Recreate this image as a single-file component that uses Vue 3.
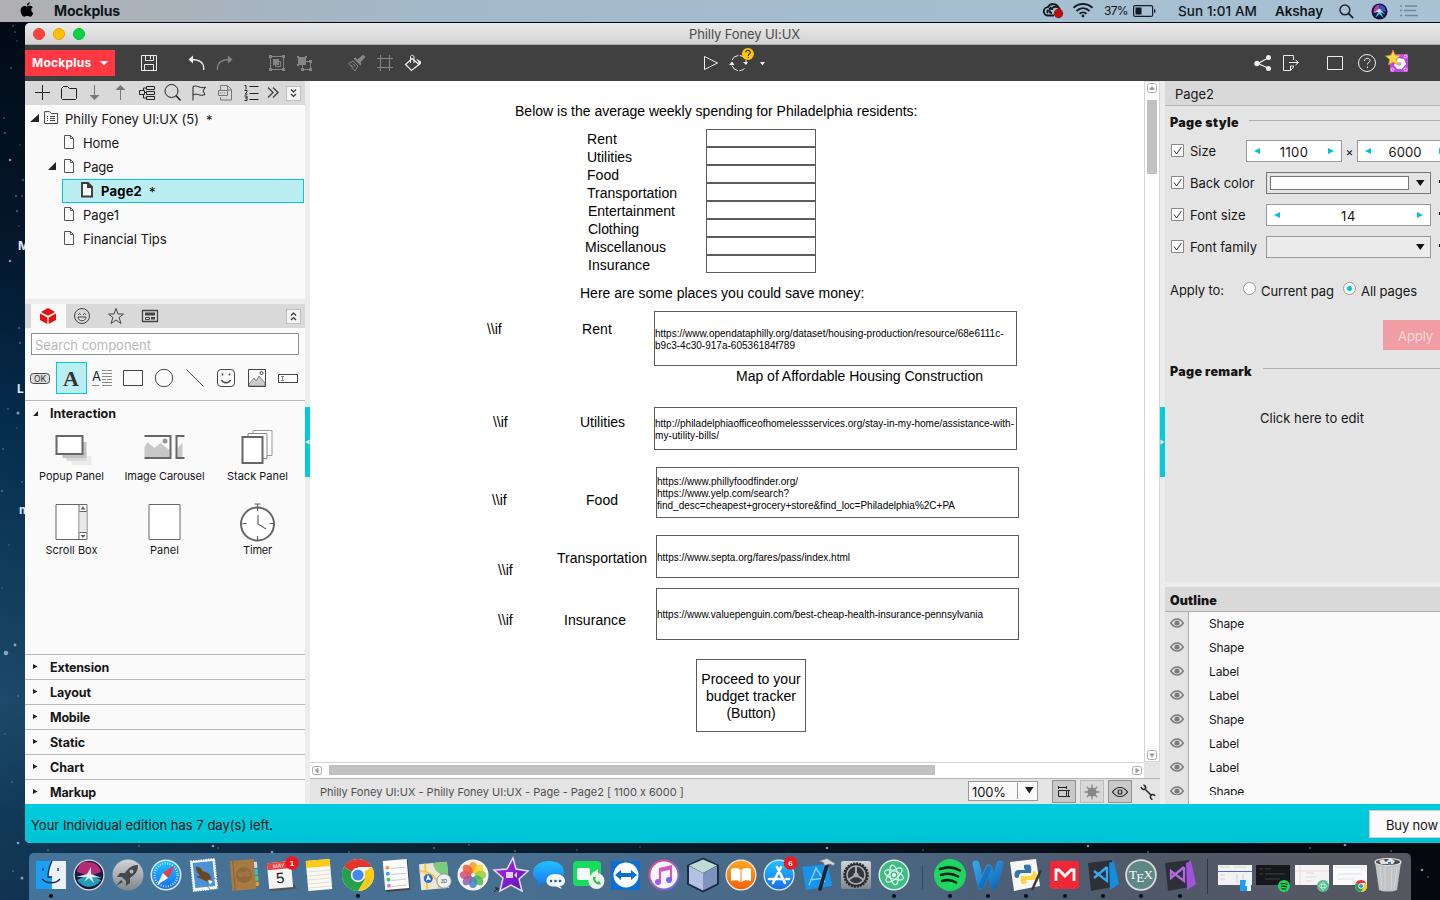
<script setup>
// Sets tracking so a label takes exactly the given width in pixels.
const vFit = {
  mounted(el, { value }) {
    const n = el.textContent.length
    const w = el.getBoundingClientRect().width
    el.style.letterSpacing = (value - w) / n + 'px'
  }
}

const stars = [
  [13, 26, 1], [15, 32, 0.9], [17, 41, 0.8], [11, 68, 1], [4, 118, 1.1], [5, 133, 1.2], [20, 145, 0.8], [10, 160, 1.3],
  [23, 180, 1.2], [16, 196, 1.2], [22, 196, 1.1], [17, 211, 1.2], [19, 226, 0.8], [10, 261, 1.3], [19, 328, 1.2],
  [20, 343, 1.2], [8, 409, 1], [18, 413, 1.5], [17, 428, 0.8], [3, 449, 1], [22, 482, 1], [2, 491, 1.2], [9, 545, 0.8],
  [2, 588, 0.8], [15, 645, 1.4], [6, 653, 2.3], [18, 696, 0.9], [5, 734, 0.8], [12, 782, 0.9], [18, 843, 1.3], [13, 871, 1.1],
  [22, 878, 1.5], [48, 850, 1.1], [139, 846, 1], [213, 846, 1.3], [218, 848, 1], [272, 852, 1.3], [349, 852, 1.1],
  [434, 848, 1.2], [469, 845, 1], [515, 851, 1.2], [577, 850, 0.9], [640, 847, 0.8], [827, 848, 1.3], [923, 850, 1],
  [1088, 846, 1.3], [1148, 852, 1.2], [1310, 848, 1.2], [1345, 845, 1.3], [1391, 851, 1.2], [1422, 870, 1.3], [1428, 877, 1.1]
]

const spending = [
  { t: 'Rent', x: 587, w: 30 }, { t: 'Utilities', x: 587, w: 45 }, { t: 'Food', x: 587, w: 32 },
  { t: 'Transportation', x: 587, w: 90 }, { t: 'Entertainment', x: 588, w: 87 }, { t: 'Clothing', x: 588, w: 51 },
  { t: 'Miscellanous', x: 585, w: 81 }, { t: 'Insurance', x: 588, w: 62 }
]

const place = (x, y) => ({ left: x - 310 + 'px', top: y - 81 + 'px' })

const labels = [
  { t: 'Below is the average weekly spending for Philadelphia residents:', x: 515, y: 111, w: 402.5 },
  ...spending.map((s, i) => ({ ...s, y: 139 + i * 18 })),
  { t: 'Here are some places you could save money:', x: 580, y: 293, w: 284.5 },
  { t: '\\\\if', x: 487, y: 329, w: 14.5 }, { t: 'Rent', x: 582, y: 329, w: 30 },
  { t: 'Map of Affordable Housing Construction', x: 736, y: 376, w: 247 },
  { t: '\\\\if', x: 493, y: 422, w: 14.5 }, { t: 'Utilities', x: 580, y: 422, w: 45 },
  { t: '\\\\if', x: 492, y: 500, w: 14.5 }, { t: 'Food', x: 586, y: 500, w: 32 },
  { t: '\\\\if', x: 498, y: 570, w: 14.5 }, { t: 'Transportation', x: 557, y: 558, w: 90 },
  { t: '\\\\if', x: 498, y: 620, w: 14.5 }, { t: 'Insurance', x: 564, y: 620, w: 62 }
]

const boxes = [
  { x: 654, y: 311, w: 363, h: 55, lines: [['https://www.opendataphilly.org/dataset/housing-production/resource/68e6111c-', 348.5], ['b9c3-4c30-917a-60536184f789', 140]] },
  { x: 654, y: 407, w: 363, h: 43, lines: [['http://philadelphiaofficeofhomelessservices.org/stay-in-my-home/assistance-with-', 359], ['my-utility-bills/', 64]] },
  { x: 656, y: 467, w: 363, h: 51, lines: [['https://www.phillyfoodfinder.org/', 141], ['https://www.yelp.com/search?', 132], ['find_desc=cheapest+grocery+store&find_loc=Philadelphia%2C+PA', 298]] },
  { x: 656, y: 535, w: 363, h: 43, lines: [['https://www.septa.org/fares/pass/index.html', 193]] },
  { x: 656, y: 588, w: 363, h: 52, lines: [['https://www.valuepenguin.com/best-cheap-health-insurance-pennsylvania', 326]] }
]

const groups = [['Extension', 59], ['Layout', 41], ['Mobile', 40], ['Static', 35], ['Chart', 34], ['Markup', 46]]
const outline = ['Shape', 'Shape', 'Label', 'Label', 'Shape', 'Label', 'Label', 'Shape']
const petals = ['#f9a01b', '#f5d328', '#9ccb3b', '#4bb749', '#3c86c6', '#8a63b0', '#d24b80', '#ef5a3a']
</script>

<template>
  <div class="desktop">
    <svg class="stars" width="1440" height="900">
      <circle v-for="(s, i) in stars" :key="i" :cx="s[0]" :cy="s[1]" :r="s[2]" fill="#b9cddb" :opacity="s[2] > 1.25 ? 0.7 : 0.32" />
    </svg>
    <span class="desk-label m">M</span>
    <span class="desk-label l">L</span>
    <span class="desk-label n">m</span>

    <header class="menubar">
      <svg class="apple" width="14" height="17" viewBox="0 0 14 17"><path d="M9.7.3c.1 1.500-1.200 3.200-2.800 3.200C6.700 2 8.100.5 9.700.3zM7 4.500c.7 0 1.700-.8 3.100-.7 1.200.1 2.200.6 2.700 1.500-2.300 1.500-1.900 4.600.5 5.600-.6 1.700-1.800 3.900-3.200 3.900-1.100 0-1.500-.7-2.900-.7s-1.800.7-2.900.7C2.600 14.800.6 11.800.6 8.600c0-3 1.900-4.700 3.900-4.700 1.100 0 2 .6 2.500.6z" /></svg>
      <b class="app"><span v-fit="66">Mockplus</span></b>
      <div class="status">
        <svg class="cc" width="22" height="18" viewBox="0 0 22 18"><g fill="none" stroke="#101a24" stroke-width="1.900"><path d="M12 13.500H6a4.200 4.200 0 010-8.400C8.500.9 14.500 1.100 16.500 5.500M9.500 5.500c-3 1-2.500 5.500.5 5.500M10 8c0-5 8-4 8 1M6 8a2 2 0 000 3" /></g><circle cx="16.500" cy="11.500" r="4.700" fill="#b80d10" /></svg>
        <svg class="wifi" width="22" height="16" viewBox="0 0 22 16"><g fill="none" stroke="#141f2a" stroke-width="2"><path d="M1.500 5.800c5.500-5 13.500-5 19 0M4.500 8.900c4-3.500 9-3.500 13 0M7.500 11.800c2-1.900 5-1.900 7 0" /></g><circle cx="11" cy="14" r="1.400" fill="#141f2a" /></svg>
        <span class="pct"><span v-fit="24">37%</span></span>
        <svg class="batt" width="23" height="12" viewBox="0 0 23 12"><rect x=".6" y=".6" width="19" height="10.800" rx="1.500" fill="none" stroke="#141f2a" stroke-width="1.200" /><path d="M2.500 2.500h6v7h-6z" fill="#101a24" /><path d="M21 4c2 .5 2 3.500 0 4z" fill="#141f2a" /></svg>
        <span class="clock"><span v-fit="79">Sun 1:01 AM</span></span>
        <span class="user"><span v-fit="48">Akshay</span></span>
        <svg class="lens" width="15" height="15" viewBox="0 0 15 15" fill="none" stroke="#1c2731" stroke-width="1.500"><circle cx="5.900" cy="5.900" r="4.900" /><path d="M9.500 9.500l4.700 4.700" stroke-width="1.800" /></svg>
        <svg class="mini-siri" width="17" height="17" viewBox="-17 -17 34 34"><circle r="16" fill="#15143e" /><path d="M-12 2C-11-10-6-14-1-13L0 0z" fill="#b93da8" /><path d="M-1-13C8-14 12-8 13 1L1-3z" fill="#3c50c8" /><path d="M0-5l-8 17 8-7 8 8z" fill="#49dbe8" /><path d="M-12 3L0-6 12 6 0 0z" fill="#fff" opacity=".75" /></svg>
        <svg class="list" width="18" height="12" viewBox="0 0 18 12" stroke="#6f8696" stroke-width="1.500"><path d="M0 1h2M5 1h12M0 5.500h2M4 5.500h12M0 10.500h2M5 10.500h13" /></svg>
      </div>
    </header>

    <main class="window">
      <div class="titlebar">
        <i class="light red"></i><i class="light amber"></i><i class="light green"></i>
        <span class="title"><span v-fit="111">Philly Foney UI:UX</span></span>
      </div>

      <nav class="toolbar">
        <div class="brand"><span v-fit="59.500">Mockplus</span><svg width="8" height="5"><path d="M0 0h8L4 4.500z" fill="#fff" /></svg></div>
        <svg class="g20"><path d="M6.500 10.500h15v15h-15zM10.500 10.500v5h8v-5M9.500 25.500v-6h9v6M15.500 11v3" /></svg>
        <svg class="g20"><path d="M20.700 25v-2c0-5-4-8.500-12-8.500" stroke-width="1.300" /><path d="M5.500 14.500l4.500-4v8z" fill="#eee" stroke="none" /></svg>
        <svg class="dim"><path d="M6.500 25v-2c0-5 4-8.500 12-8.500" stroke-width="1.300" /><path d="M21.500 14.500l-4.500-4v8z" fill="#858585" stroke="none" /></svg>
        <svg class="g24 dim"><path d="M7.500 11.500h13v13h-13z" /><path d="M6 10h3v3H6zM19 10h3v3h-3zM6 23h3v3H6zM19 23h3v3h-3zM10 14h6v6h-6z" fill="#858585" stroke="none" /><path d="M12.500 16.500h5v5h-5z" /></svg>
        <svg class="dim"><path d="M7 12h8v8H7zM6 11h2v2H6zM14 11h2v2h-2zM6 19h2v2H6z" fill="#858585" stroke="none" /><path d="M11.500 16.500h8v8h-8z" /><path d="M18 15h3v3h-3zM10 23h3v3h-3zM18 23h3v3h-3z" fill="#858585" stroke="none" /></svg>
        <svg class="g24 dim"><path d="M5.500 18.500l4.500-2.500 5 5-3 5z" /><path d="M8 20l2 2M10 18.500l2 3" /><path d="M10.500 13.500l2-1 6 6-1 2zM14.500 14.500l5.500-5 2.500 2.500-5 5.500z" fill="#858585" stroke="none" /></svg>
        <svg class="dim"><path d="M9.500 10v16M18.500 10v16M6 13.500h16M6 22.500h16" /></svg>
        <svg><path d="M13 13.500l7 6-7.500 6-6-6z" stroke-width="1.300" /><path d="M11.500 18v-6c0-2.500 3.500-2 3.500 0v6" /><path d="M17 13.500l5 3v2l-1.500 2-1.500-4z" fill="#eee" stroke="none" /></svg>
        <svg class="g270"><path d="M7.500 11.500v13l13-6.500z" /></svg>
        <svg class="sync"><path d="M7 20.500a7.500 7.500 0 0012.500 3M7 15a7.500 7.500 0 0112-2.500M21 15v3" stroke-dasharray="8 1.500" /><path d="M4 20l3-3.500 2.500 3.500zM18 17l3 3 2-3z" fill="#eee" stroke="none" /><circle cx="22.900" cy="9" r="6" fill="#ffc800" stroke="none" /><path d="M20.700 7.500c0-3.500 5-2.500 4.500.3-.3 1.300-2 1-2 3.200M23.200 12v1" stroke="#333" stroke-width="1.200" /></svg>
        <svg class="caret"><path d="M7 17h5l-2.500 3.500z" fill="#eee" stroke="none" /></svg>
        <svg class="share"><path d="M20 12.500L9 18.500l11 5" stroke-width="1.300" /><g fill="#eee" stroke="none"><circle cx="19.500" cy="12.500" r="2.500" /><circle cx="8" cy="18.500" r="2.700" /><circle cx="19.500" cy="23.500" r="2.500" /></g></svg>
        <svg><path d="M16.500 15v-4.500h-10v15h7l3-3.500v-1M13.500 25v-4h3M12 17.500h9M18.500 15l3 2.500-3 2.500" /></svg>
        <svg class="g16"><path d="M6.500 11.500h15v13h-15z" /></svg>
        <svg class="g4"><circle cx="14" cy="18" r="8.500" /><path d="M11.500 16c0-3.500 5.500-3.500 5.500-.5 0 2-2.500 1.500-2.500 4M14.500 21.500v1.500" /></svg>
        <svg class="g3"><path d="M6 9h18v18H6z" fill="#c044e8" stroke="none" /><path d="M14 13l6 1 2 5-4 5h-5l-3-4z" fill="#fff" stroke="none" /><circle cx="15.500" cy="19" r="2" fill="#bcb3be" stroke="none" /><g stroke="#f9dcff"><circle cx="8.500" cy="24.500" r="1.500" /><circle cx="21.500" cy="11.500" r="1.500" /><circle cx="21.500" cy="24.500" r="1.500" /></g><path d="M9 5l2 5 5.500.5-4.300 3.700L14 20l-5-3-4.500 3 1.200-5.600L1.500 11l5.500-.7z" fill="#ffd940" stroke="#c99922" stroke-width=".7" /></svg>
      </nav>

      <div class="body">
        <aside class="left">
          <div class="treebar">
            <svg><path d="M13.500 4v15M6 11.500h15" /></svg>
            <svg><path d="M6.500 7.500l2-2h4l2 2h7v10l-1 1h-13l-1-1z" /></svg>
            <svg class="grey"><path d="M13.500 4v13" /><path d="M8.500 14h10l-5 5z" fill="#777" stroke="none" /></svg>
            <svg class="grey"><path d="M13.500 19V6" /><path d="M8.500 9h10l-5-5z" fill="#777" stroke="none" /></svg>
            <svg><path d="M6.500 9.500h5v4h-5zM13.500 5.500h8v3h-8zM13.500 10.500h8v3h-8zM13.500 15.500h8v3h-8zM11.500 11.500h2M13 7h-2.500v2M13 17h-2.500v-3" /></svg>
            <svg><circle cx="12.500" cy="10" r="6.500" /><path d="M17 14.500l4.500 5" stroke-width="1.500" /></svg>
            <svg><path d="M8 19.500v-14c5-2 7 3 12.500.500l-2.500 4 2 3.500c-5.500 2.500-7-2-12 .5" /></svg>
            <svg class="grey"><path d="M9.500 9V4.500h7l4 4V19h-11v-3M16.500 5v4h4M7.500 9.500h9v5h-9z" /><path d="M9 12h6" stroke-dasharray="1 1" /></svg>
            <svg><path d="M12.500 5.500h9M12.500 12.500h9M12.500 18.500h9" /><path d="M7.500 4.500H9v4M7.500 9.500H10v1.500l-2 2h2.500M7.500 15h2.500v4.500H7.500M8 17h2" /></svg>
            <svg class="grey more"><path d="M5 6.500l5 5-5 5M10 6.500l5 5-5 5" stroke-width="1.400" /></svg>
            <span class="fold"><svg viewBox="0 0 13 13"><path d="M4 2.500l2.500 2.500L9 2.500M4 7l2.500 2.500L9 7" /></svg></span>
          </div>

          <div class="tree">
            <div class="node root"><svg class="tri" width="9" height="9"><path d="M9 0v8H0z" fill="#222" /></svg><svg class="proj" width="15" height="14"><path d="M.6 12.500V.6h5l1.500 2h6.500v9.900zM3 5.500h1M6 5.500h5M3 7.500h1M6 7.500h5M3 9.500h1M6 9.500h5" /></svg><span v-fit="134">Philly Foney UI:UX (5)</span><span class="star">*</span></div>
            <div class="node d1"><svg class="page"><path d="M.5.5h6l3 3v10h-9zM6.500.5v3h3" /></svg><span v-fit="36">Home</span></div>
            <div class="node d1 open"><svg class="tri" width="9" height="9"><path d="M8 0v8H0z" fill="#222" /></svg><svg class="page"><path d="M.5.5h6l3 3v10h-9zM6.500.5v3h3" /></svg><span v-fit="30.500">Page</span></div>
            <div class="node sel"><svg class="page big"><path d="M1 1h6l4 4v9.500H1zM7 1v4h4" /></svg><b v-fit="41">Page2</b><span class="star">*</span></div>
            <div class="node d1"><svg class="page"><path d="M.5.5h6l3 3v10h-9zM6.500.5v3h3" /></svg><span v-fit="36">Page1</span></div>
            <div class="node d1"><svg class="page"><path d="M.5.5h6l3 3v10h-9zM6.500.5v3h3" /></svg><span v-fit="83.500">Financial Tips</span></div>
          </div>

          <div class="tabs">
            <span class="tab on"><svg width="18" height="18" viewBox="0 0 18 18"><path d="M9 1l7 4-7 3.800L2 5zM1 6.500l7.300 4V17L1 13zM17 6.500l-7.300 4V17l7.300-4z" /></svg></span>
            <span class="tab"><svg width="18" height="18" viewBox="0 0 18 18"><circle cx="9" cy="9" r="7.500" /><path d="M5 10h8c0 5-8 5-8 0zM5.500 8c0-2 2-2 2 0M10.500 8c0-2 2-2 2 0" /></svg></span>
            <span class="tab"><svg width="18" height="18" viewBox="0 0 18 18"><path d="M9 1.500l2 5.500h5.500l-4.400 3.500 1.900 6L9 13l-5 3.500 1.900-6L1.500 7H7z" /></svg></span>
            <span class="tab"><svg width="18" height="18" viewBox="0 0 18 18"><path d="M1.500 3.500h15v11h-15z" stroke-width="1.300" /><path d="M4 5.500h10v3H4zM10 10h4v2.500h-4z" fill="#444" stroke="none" /><path d="M4.500 10.500h4v2h-4z" /></svg></span>
            <span class="fold"><svg viewBox="0 0 13 13"><path d="M4 5.500L6.500 3 9 5.500M4 10l2.500-2.500L9 10" /></svg></span>
          </div>

          <div class="search"><span v-fit="116">Search component</span></div>

          <div class="quick">
            <svg><rect x="5.500" y="11.500" width="19" height="10" rx="3" fill="#ddd" /><text x="15" y="19.600" text-anchor="middle" font-size="8.500" font-family="Inter, sans-serif" fill="#333" stroke="none">OK</text></svg>
            <svg class="picked"><text x="15" y="23.500" text-anchor="middle" font-size="22" font-weight="bold" font-family="Liberation Serif, serif" fill="#333" stroke="none">A</text></svg>
            <svg><text x="9.500" y="18.500" text-anchor="middle" font-size="13" font-family="Inter, sans-serif" fill="#222" stroke="none">A</text><path d="M15 8.500h4M20 8.500h5M15 11.500h10M15 14.500h10M15 17.500h4M20 17.500h5M5 23.500h7M15 23.500h10M5 20.500h0M15 20.500h10" stroke="#888" /></svg>
            <svg><path d="M5.500 8.500h19v15h-19z" /></svg>
            <svg><circle cx="15" cy="16" r="8.700" /></svg>
            <svg><path d="M6.500 7.500l17 17" /></svg>
            <svg><rect x="6.500" y="7.500" width="17" height="17" rx="3.500" /><path d="M10.500 18c1.500 3.500 7.500 3.500 9 0M11.500 11.500v2M18.500 11.500v2" stroke-width="1.500" /></svg>
            <svg><path d="M7 22l5-6 2 3 3-5 6 7v3H7z" fill="#ccc" stroke="#888" /><path d="M6.500 7.500h17v17h-17z" /><circle cx="19.500" cy="11" r="1.500" /></svg>
            <svg><path d="M5.500 12.500h19v8h-19z" fill="#fff" /><path d="M8 14.500h3M9.500 14.500v4M8 18.500h3" stroke="#888" /></svg>
          </div>

          <section class="interaction">
            <h3><svg width="5" height="5"><path d="M5 0v5H0z" fill="#222" /></svg><span v-fit="66">Interaction</span></h3>
            <div class="widgets">
              <figure><svg><g stroke="none"><path d="M26 28h20v9H26z" fill="#ececec" /><path d="M21 23h20v10H21z" fill="#dadada" /><path d="M17 14h24v16H17z" fill="#c2c2c2" /></g><path d="M11 8h26v18H11z" fill="#fff" stroke-width="2" /></svg><figcaption v-fit="65">Popup Panel</figcaption></figure>
              <figure><svg><path d="M6 19l3-5 7 6 6-5 9 7v7H6zM39 20l5-5v15h-5z" fill="#c8c8c8" stroke="none" /><circle cx="26.500" cy="13" r="2.500" fill="#999" stroke="none" /><path d="M6 8h26v22H6M46 8h-8v22h8" stroke-width="2" /></svg><figcaption v-fit="80">Image Carousel</figcaption></figure>
              <figure><svg><path d="M21.500 2.500h19v25h-19z" fill="#fff" stroke="#999" /><path d="M16.500 5.500h19v25h-19z" fill="#fff" stroke="#888" /><path d="M11 9h20v26H11z" fill="#fff" stroke-width="2" /></svg><figcaption v-fit="61">Stack Panel</figcaption></figure>
              <figure><svg><path d="M10.500.5h31v35h-31zM33.500.5v35M34 7.500h7M34 28.500h7" fill="#fff" /><path d="M34 8h7v20h-7z" fill="#e8e8e8" stroke="none" /><path d="M35 5.500h5L37.500 2.500zM35 31h5l-2.500 3z" fill="#555" stroke="none" /></svg><figcaption v-fit="52">Scroll Box</figcaption></figure>
              <figure><svg><path d="M10.500.5h31v35h-31z" fill="#fff" /></svg><figcaption v-fit="29">Panel</figcaption></figure>
              <figure><svg><circle cx="26" cy="20" r="16.500" stroke-width="2" fill="#fff" /><path d="M23 0h6M26 0v7M26 32v4M11 19.500h4M38 19.500h4M26.500 11v9l8 5" stroke-width="1.200" /></svg><figcaption v-fit="29">Timer</figcaption></figure>
            </div>
          </section>
          <div v-for="g in groups" :key="g[0]" class="group"><svg width="5" height="6"><path d="M0 0v5l4.500-2.500z" fill="#222" /></svg><span v-fit="g[1]">{{ g[0] }}</span></div>
        </aside>

        <div class="gutter"><span class="grip"><svg width="5" height="6"><path d="M4.500.5v5L.5 3z" fill="#fff" /></svg></span></div>

        <section class="center">
          <div class="stage">
            <div class="canvas">
              <span v-for="(l, i) in labels" :key="i" v-fit="l.w" class="label" :style="place(l.x, l.y - 8)">{{ l.t }}</span>
              <i v-for="(s, i) in spending" :key="s.t" class="cell" :style="place(706, 129 + i * 18)"></i>
              <div v-for="b in boxes" :key="b.y" class="box" :style="{ ...place(b.x, b.y), width: b.w + 'px', height: b.h + 'px' }">
                <div v-for="ln in b.lines" :key="ln[0]" class="url"><span v-fit="ln[1]">{{ ln[0] }}</span></div>
              </div>
              <div class="box button" :style="place(696, 659)">
                <div><span v-fit="99.500">Proceed to your</span></div><div><span v-fit="90">budget tracker</span></div><div><span v-fit="49">(Button)</span></div>
              </div>
            </div>
            <div class="vscroll"><svg class="sb"><rect x=".5" y=".5" width="9" height="9" rx="2" /><path d="M2 7h6L5 3z" /></svg><i class="thumb"></i><svg class="sb end"><rect x=".5" y=".5" width="9" height="9" rx="2" /><path d="M2 3.500h6L5 7.500z" /></svg></div>
          </div>
          <div class="hscroll"><svg class="sb"><rect x=".5" y=".5" width="9" height="8" rx="2" /><path d="M6.500 1.500v6l-4-3z" /></svg><i class="thumb"></i><svg class="sb end"><rect x=".5" y=".5" width="9" height="8" rx="2" /><path d="M3.500 1.500v6l4-3z" /></svg></div>
          <div class="statusbar">
            <span class="crumbs"><span v-fit="365">Philly Foney UI:UX - Philly Foney UI:UX - Page - Page2 [ 1100 x 6000 ]</span></span>
            <span class="zoom"><span v-fit="34">100%</span><i></i><svg width="9" height="7"><path d="M0 0h8.500L4.250 6.500z" fill="#222" /></svg></span>
            <span class="sbtn on"><svg width="24" height="22"><path d="M6.500 6v3M14.500 6v3M6.500 7.500h8M6.500 10.500h8v6h-8zM15 10.500h3M16.500 10.500v6M15 16.500h3" stroke="#222" fill="none" /></svg></span>
            <span class="sbtn"><svg width="24" height="22"><circle cx="12" cy="12" r="4.500" fill="#888" /><path d="M12 4.500v15M4.500 12h15M6.700 6.700l10.600 10.600M17.300 6.700L6.700 17.300" stroke="#888" stroke-width="1.300" /></svg></span>
            <span class="sbtn on"><svg width="24" height="22" fill="none" stroke="#222" stroke-width="1.200"><path d="M4.500 12c4-6 11-6 15 0-4 6-11 6-15 0z" /><circle cx="12" cy="12" r="2" /></svg></span>
            <svg class="wrench" width="16" height="16" fill="none" stroke="#222"><path d="M5.500 5.500l6 6" stroke-width="1.500" /><path d="M1 3c1 3 3.500 3 4.500 1.500C6 3 5 1.500 3.500 1M15 12c-1-2-3.500-2-4.500 0-.5 1.500.5 3 2 3.500" stroke-width="1.600" /></svg>
          </div>
        </section>

        <div class="gutter"><span class="grip"><svg width="5" height="6"><path d="M.5.5v5l4-2.500z" fill="#fff" /></svg></span></div>

        <aside class="right">
          <div class="rhead"><span v-fit="39">Page2</span></div>
          <div class="props">
            <div class="section"><b v-fit="69">Page style</b><i class="rule r1"></i></div>
            <div class="prop size">
              <svg class="check"><path d="M.5.5h12v12H.5z" /><path d="M3 6.500l2.500 3.500L10.500 3" /></svg><span class="name"><span v-fit="26">Size</span></span>
              <span class="spin w96"><svg class="al"><path d="M6 0v6L0 3z" /></svg><span v-fit="28.500">1100</span><svg class="al"><path d="M0 0v6l6-3z" /></svg></span>
              <span class="times">×</span>
              <span class="spin w96"><svg class="al"><path d="M6 0v6L0 3z" /></svg><span v-fit="33">6000</span><svg class="al"><path d="M0 0v6l6-3z" /></svg></span>
            </div>
            <div class="prop"><svg class="check"><path d="M.5.5h12v12H.5z" /><path d="M3 6.500l2.500 3.500L10.500 3" /></svg><span class="name"><span v-fit="64.500">Back color</span></span><span class="drop dark"><i class="swatch"></i><svg class="dn"><path d="M0 0h8.500L4.250 6z" /></svg></span><i class="tick"></i></div>
            <div class="prop"><svg class="check"><path d="M.5.5h12v12H.5z" /><path d="M3 6.500l2.500 3.500L10.500 3" /></svg><span class="name"><span v-fit="55.500">Font size</span></span><span class="spin w165"><svg class="al"><path d="M6 0v6L0 3z" /></svg><span v-fit="15">14</span><svg class="al"><path d="M0 0v6l6-3z" /></svg></span><i class="tick"></i></div>
            <div class="prop"><svg class="check"><path d="M.5.5h12v12H.5z" /><path d="M3 6.500l2.500 3.500L10.500 3" /></svg><span class="name"><span v-fit="67">Font family</span></span><span class="drop"><svg class="dn"><path d="M0 0h8.500L4.250 6z" /></svg></span><i class="tick"></i></div>
            <div class="apply-to">
              <span class="cap"><span v-fit="54">Apply to:</span></span>
              <i class="radio"></i><span class="opt"><span v-fit="73">Current pag</span></span>
              <i class="radio on"></i><span class="opt"><span v-fit="56">All pages</span></span>
            </div>
            <div class="apply"><span v-fit="35">Apply</span></div>
            <div class="section remark"><b v-fit="82">Page remark</b><i class="rule r2"></i></div>
            <div class="edit"><span v-fit="104">Click here to edit</span></div>
          </div>
          <div class="ohead"><b v-fit="47">Outline</b></div>
          <div class="outline">
            <div class="orows">
              <div v-for="(o, i) in outline" :key="i" class="orow"><span class="eye"><svg width="14" height="10" viewBox="0 0 14 10"><path d="M.8 5c3.500-5.300 9-5.300 12.400 0-3.400 5.300-8.900 5.300-12.400 0z" fill="none" stroke="#7b7b7b" stroke-width="1.500" /><circle cx="7" cy="5" r="2.600" fill="#7b7b7b" /></svg></span><span class="oname"><span v-fit="o === 'Shape' ? 35 : 30">{{ o }}</span></span></div>
            </div>
          </div>
        </aside>
      </div>

      <footer class="footer"><span v-fit="242">Your Individual edition has 7 day(s) left.</span><span class="buy"><span v-fit="52">Buy now</span></span></footer>
    </main>

    <svg width="0" height="0" class="defs">
      <defs>
        <linearGradient id="gSteel" x2="0" y2="1"><stop stop-color="#d0d4d8" /><stop offset="1" stop-color="#80868c" /></linearGradient>
        <linearGradient id="gBlue" x2="0" y2="1"><stop stop-color="#1fc3ff" /><stop offset="1" stop-color="#1a6df0" /></linearGradient>
        <linearGradient id="gOrange" x2="0" y2="1"><stop stop-color="#ffa51d" /><stop offset="1" stop-color="#f8610e" /></linearGradient>
        <linearGradient id="gPurple" x2="1" y2="1"><stop stop-color="#c026f0" /><stop offset="1" stop-color="#4a15b8" /></linearGradient>
        <linearGradient id="gNote" x2="1" y2="1"><stop stop-color="#fa4a7b" /><stop offset="1" stop-color="#5a6bf0" /></linearGradient>
        <linearGradient id="gWord" x2="1" y2="1"><stop stop-color="#35a3ea" /><stop offset="1" stop-color="#0f69b8" /></linearGradient>
      </defs>
    </svg>
    <div class="dock">
      <svg><path d="M-15-14h30v28h-30z" fill="#eaf2f8" /><path d="M-15-14H1c-3 6-4 10-4 16h4v12h-16z" fill="#1b9ff3" /><path d="M-15-14h3v28h-3z" fill="#1b9ff3" /><path d="M-8-7v3M7-7v3M-9 4C-4 9 5 9 9 4M1-14c-3 6-4 10-4 16h4" fill="none" stroke="#1c2a3a" stroke-width="1.300" /><circle class="dot" cy="21" r="2.100" /></svg>
      <svg><circle r="15.500" fill="#ddd" /><circle r="14.300" fill="#191842" /><path d="M-12-3C-11-12-5-14 0-13 6-13 11-9 12-3L1 1z" fill="#b32c78" /><path d="M-12 5C-6 14 6 14 12 5L0-1z" fill="#249db5" /><path d="M-13 2L-2-1 2-8 2-1 13 3 3 2 5 8 0 3-5 7-2 2z" fill="#fff" opacity=".85" /></svg>
      <svg><circle r="15.500" fill="url(#gSteel)" /><path d="M10-10C4-10 0-7-3-2l-5 0-3 4 5 0 4 4 0 5 4-3 0-5C7 0 10-4 10-10z" fill="#45494e" /><circle cx="3.500" cy="-3.500" r="1.900" fill="#b4b8bc" /><path d="M-7 5l-5 6 7-4z" fill="#45494e" /></svg>
      <svg><circle r="15.500" fill="#e4e8eb" /><circle r="14" fill="url(#gBlue)" /><circle r="11.500" fill="none" stroke="#bde6ff" stroke-dasharray="1 1.500" stroke-width="2" /><path d="M9-10L2 3-3-2z" fill="#f33" /><path d="M-9 10L2 3-3-2z" fill="#fff" /></svg>
      <svg><g transform="rotate(-6)"><path d="M-12-15h24v30h-24z" fill="#f5f5f2" stroke="#f5f5f2" stroke-dasharray="1.500 1" stroke-width="1.500" /><path d="M-10-13h20v25h-20z" fill="#4a92d4" /><path d="M-7-9c2 0 5 1 6 5 4 1 8 4 8 8l-3 4-8-5-4-2 4-1c-2-2-4-5-3-9z" fill="#6b4622" /><path d="M3 5l5 2-3 3z" fill="#fff" /></g><circle cx="9" cy="9" r="6" fill="none" stroke="#58789a" opacity=".7" /></svg>
      <svg><g transform="rotate(-5)"><path d="M11-12h4v6h-4z" fill="#ddd" /><path d="M11-5h4v6h-4z" fill="#38c0c8" /><path d="M11 2h4v5h-4z" fill="#5cc464" /><path d="M11 8h4v4h-4z" fill="#f69b25" /><path d="M-12-15h24v30h-24z" fill="#a77a43" /><path d="M-9-15v30" stroke="#8c632f" /><circle cx="1" r="8" fill="#916a38" /><circle cx="-2" cy="-1" r="3" fill="#9f7642" /><circle cx="4" cy="-1" r="3" fill="#9f7642" /></g></svg>
      <svg><g transform="rotate(-5)"><path d="M-14 11h27l2 4h-26z" fill="#555" /><path d="M-13-13h24v26h-24z" fill="#f4f4f2" /><path d="M-13-13h24v7h-24z" fill="#e64442" /><text x="-1.500" y="-7.500" font-size="5.500" text-anchor="middle" fill="#fff">MAY</text><text x="-1" y="8" font-size="15" text-anchor="middle" fill="#222">5</text></g><circle cx="11" cy="-12" r="6.800" fill="#f2161c" /><text x="11" y="-9" font-size="8" font-weight="bold" text-anchor="middle" fill="#fff">1</text></svg>
      <svg><g transform="rotate(-5)"><path d="M-12-15h24v30h-24z" fill="#fbfaf2" /><path d="M-12-15h24v7h-24z" fill="#fccb18" /><path d="M-12-4h24M-12 0h24M-12 4h24M-12 8h24M-12 12h24" stroke="#d4d2cb" stroke-width=".7" /></g></svg>
      <svg><circle r="16" fill="#fff" /><path d="M0 0L-13.900-8A16 16 0 0113.900-8H0z" fill="#e5352a" /><path d="M0 0l13.900-8A16 16 0 010 16l7-12z" fill="#fccb16" /><path d="M0 0l7 4L0 16A16 16 0 01-13.900-8z" fill="#27a04b" /><circle r="7.200" fill="#fff" /><circle r="5.600" fill="#4389ee" /><circle class="dot" cy="21" r="2.100" /></svg>
      <svg><g transform="rotate(-5)"><path d="M-11-14h24v30h-24z" fill="#444" /><path d="M-12-15h24v29h-24z" fill="#fbfbfb" /><path d="M-5-7h15M-5-1h15M-5 5h15M-5 11h15" stroke="#ccc" /><circle cx="-8" cy="-8" r="2" fill="#ff9830" /><circle cx="-8" cy="-2" r="2" fill="#3fa3f3" /><circle cx="-8" cy="4" r="2" fill="#47c961" /><circle cx="-8" cy="10" r="2" fill="#d677e0" /></g></svg>
      <svg><g transform="rotate(-5)"><path d="M-14-12h28v26h-28z" fill="#ebe6d6" /><path d="M0-12h14V2c-8 0-14-7-14-14z" fill="#7acb7c" /><path d="M-8-12v26M-14-5c10 0 18 8 18 19" stroke="#f5c93a" fill="none" stroke-width="2" /><circle cx="-6" cy="3" r="4.500" fill="#2e6ed0" /><path d="M-6-1l2.500 6-2.500-1-2.500 1z" fill="#fff" /></g><circle cx="10" cy="6" r="7.200" fill="#eef0f0" stroke="#91979d" /><text x="10" y="8" font-size="5" text-anchor="middle" fill="#444">3D</text></svg>
      <svg><circle r="15.500" fill="#f5f3ef" /><ellipse v-for="(c, i) in petals" :key="c" cy="-7.500" rx="4.200" ry="5.800" :fill="c" opacity=".85" :transform="`rotate(${i * 45})`" /></svg>
      <svg><path d="M2-17l3 11 12 2-9 8 3 12L0 10l-11 6 3-13-9-8 13-1z" fill="url(#gPurple)" stroke="#e5dcef" stroke-width="1.500" /><path d="M-5-3h7v6h-7zM3 0l3-3v6z" fill="#ddd0f4" /><path d="M-17 17l4-4M-16 13h3v3" stroke="#222" fill="none" /></svg>
      <svg><path d="M0-14c20 0 20 22 0 22-3 0-5 0-7 0l-6 5 2-7c-10-7-4-20 11-20z" fill="url(#gBlue)" /><path d="M6-1c13 0 12 12 5 12l2 3-6-2.500C-6 13-5-1 6-1z" fill="#f2f7fa" /><g fill="#2b5b8f"><circle cx="2" cy="6" r="1.300" /><circle cx="6.500" cy="6" r="1.300" /><circle cx="11" cy="6" r="1.300" /></g></svg>
      <svg><rect x="-15" y="-14" width="28" height="25" rx="4" fill="#19dc5d" /><rect x="-11" y="-7" width="13" height="12" rx="2" fill="#f4fff7" /><path d="M3-1l7-5v10z" fill="#f4fff7" /><circle cx="8.500" cy="6" r="8" fill="#eef2ef" /><path d="M5 2c-1 4 4 9 8 7l-2-3-2 1-2-3 1-2z" fill="#24c352" /></svg>
      <svg><rect x="-15" y="-14" width="29" height="29" rx="1" fill="#0b6ed4" /><circle r="12.500" fill="#fff" /><path d="M-11 0l6-5v3H5v-3l6 5-6 5V2H-5v3z" fill="#0b6ed4" /></svg>
      <svg><circle r="15.500" fill="url(#gNote)" /><circle r="13.500" fill="#f8f5fa" /><path d="M-4 7V-6L7-8.500V5M-4-4L7-6.500" fill="none" stroke="#d05ab8" stroke-width="2.200" /><circle cx="-6" cy="7" r="3" fill="#9a5dee" /><circle cx="5" cy="5" r="3" fill="#7b64ee" /></svg>
      <svg><path d="M0-17.500l16 7.500v19.500L0 17.500-16 9.500V-10z" fill="#1c2b4a" /><path d="M0-15.500l14 6L0-2-14-9.500z" fill="#bfdcd4" /><path d="M-14-9L0-2v17.500l-14-7z" fill="#b5c1e2" /><path d="M14-9L0-2v17.500l14-7z" fill="#7e92be" /></svg>
      <svg><circle r="15.500" fill="#eee" /><circle r="14.300" fill="url(#gOrange)" /><path d="M-10-6c4-2 8-1 9.500 1V7c-3-2-6-2-9.500-1zM10-6C6-8 2-7 .5-5V7c3-2 6-2 9.500-1z" fill="#fff" /></svg>
      <svg><circle r="15.500" fill="#e0eaf0" /><circle r="14.300" fill="url(#gBlue)" /><path d="M-6 8L2-8M6 8L-2-8M-10 4H3M7 4h3" stroke="#fff" stroke-width="2.600" stroke-linecap="round" /><circle cx="11.500" cy="-12" r="6.800" fill="#ee1a20" /><text x="11.500" y="-9" font-size="8" font-weight="bold" text-anchor="middle" fill="#fff">6</text></svg>
      <svg><path d="M-16-8L10-11l4 22-26 4z" fill="#1794ea" /><path d="M-9 10L-2-7 7 7M-8 5L7 3" stroke="#7cd0ff" fill="none" stroke-width="1.500" /><path d="M9-10L2 14" stroke="#202328" stroke-width="3.600" stroke-linecap="round" /><path d="M1-14l8-2.500 8 5-1.500 2-4-1.500-5 1.500-1-3z" fill="#d5d8dc" stroke="#72777d" stroke-width=".7" /></svg>
      <svg><rect x="-15" y="-14" width="30" height="28" rx="2" fill="url(#gSteel)" /><circle r="11.500" fill="#33363a" stroke="#282a2d" stroke-width="2.500" stroke-dasharray="2 1" /><circle r="9" fill="none" stroke="#aaaeb3" stroke-width="1.500" /><circle r="2.500" fill="#aaaeb3" /><path d="M0 0v-9M0 0l8 5M0 0l-8 5" stroke="#aaaeb3" stroke-width="2" /></svg>
      <svg><circle r="15.500" fill="#dcebe3" /><circle r="14" fill="#3ebc83" /><g fill="none" stroke="#e9fff4" stroke-width="1.100"><ellipse rx="10" ry="4" transform="rotate(20)" /><ellipse rx="10" ry="4" transform="rotate(80)" /><ellipse rx="10" ry="4" transform="rotate(140)" /></g><circle r="2" fill="#fff" /><circle class="dot" cy="21" r="2.100" /></svg>
      <i class="sep"></i>
      <svg><circle r="16" fill="#1ed760" /><path d="M-10-6c7-2.500 14-2 20 1.500M-9 0c6-2 12-1.500 17 1.500M-8 6c5-1.500 10-1 14 1.500" fill="none" stroke="#16221a" stroke-width="2.600" stroke-linecap="round" /><circle class="dot" cy="21" r="2.100" /></svg>
      <svg><path d="M-12-11L-7 11 1-7 6 11 12-11" fill="none" stroke="url(#gWord)" stroke-width="7" stroke-linejoin="round" stroke-linecap="round" /><path d="M-7 11L1-7" fill="none" stroke="#0d5ca6" stroke-width="5" stroke-linecap="round" opacity=".45" /><circle class="dot" cy="21" r="2.100" /></svg>
      <svg><path d="M-16-13L10-16l4 27-26 5z" fill="#f7f7f5" /><path d="M-2-10c7-2 8 1 7 8h-9c-4 0-2 5-5 5-4 0-3-8 1-8h7l-1-2z" fill="#3674aa" /><path d="M8-5c4 0 4 9-1 9H0l1 3c-6 3-7 0-6-7h8c5 0 3-5 5-5z" fill="#ffd445" transform="translate(0 1)" /><path d="M15-5L6 15" stroke="#393939" stroke-width="2.500" /><circle class="dot" cy="21" r="2.100" /></svg>
      <svg><rect x="-15" y="-14" width="29" height="28" rx="2" fill="#ef2739" /><path d="M-9 6V-5h3L0 1l6-6h3V6" fill="none" stroke="#fff" stroke-width="2.800" /><circle class="dot" cy="21" r="2.100" /></svg>
      <svg><path d="M-15-12L9-15v27l-21 4z" fill="#2d3036" /><path d="M6-12l5-2 5 23-9 6z" fill="#168ddb" /><path d="M4-8V6L-9-4M-9 3L4-8" fill="none" stroke="#3ba9ef" stroke-width="2.300" /><circle class="dot" cy="21" r="2.100" /></svg>
      <svg><circle r="15.800" fill="#d7dddc" /><circle r="14" fill="#5e8786" /><text y="4" font-size="13" font-family="Liberation Serif, serif" text-anchor="middle" fill="#fff" textLength="24">T<tspan dy="3">E</tspan><tspan dy="-3">X</tspan></text><circle class="dot" cy="21" r="2.100" /></svg>
      <svg><path d="M-15-12L9-15v27l-21 4z" fill="#2d3036" /><path d="M6-12l5-2 5 23-9 6z" fill="#a252dc" /><path d="M4-8V6L-9-4v7L4-8" fill="none" stroke="#b06ae2" stroke-width="2.300" /><circle class="dot" cy="21" r="2.100" /></svg>
      <i class="sep tall"></i>
      <svg><path d="M-17-10h34v20h-34z" fill="#f2f2f2" /><path d="M-17-3.500h34" stroke="#456ec0" stroke-width="1.200" /><path d="M-15-8h10M-15 0h5M-15 4h5M-2-8h14M2-1v9M8-1v9" stroke="#d4d4d4" /><path d="M5 5h11v11H5z" fill="#e7f2fc" /><path d="M5 5h6l-1 6h2v5H5z" fill="#1c9df2" /></svg>
      <svg><path d="M-17-10h34v20h-34z" fill="#17181b" /><path d="M-14-6h4M-8-6h6M-14-1h4M-8-1h20M-8 4h15" stroke="#3c3e42" /><circle cx="11" cy="11" r="6" fill="#1ed760" /><path d="M7.500 9c3-1 5-.5 7 .5M8 11.500c2-.7 4-.5 6 .5M8.500 14c2-.5 3-.5 4.500.3" stroke="#17251b" fill="none" stroke-width="1.200" /></svg>
      <svg><path d="M-17-10h34v20h-34z" fill="#f5f3f3" /><path d="M-17-4h34M-12-10V10M-6-2h8M-6 2h10M-6 6h6" stroke="#e4cfd2" stroke-width=".7" /><circle cx="11" cy="11" r="6" fill="#58bd8e" /><ellipse cx="11" cy="11" rx="4" ry="1.700" fill="none" stroke="#e5fff2" stroke-width=".6" /><ellipse cx="11" cy="11" rx="1.700" ry="4" fill="none" stroke="#e5fff2" stroke-width=".6" /></svg>
      <svg><path d="M-17-10h34v20h-34z" fill="#fafafa" /><path d="M-15-8h29M-12-1h24M-12 4h16" stroke="#d3dde2" stroke-width=".8" /><g transform="translate(11 11) scale(.38)"><circle r="16" fill="#fff" /><path d="M0 0L-13.900-8A16 16 0 0113.900-8H0z" fill="#e5352a" /><path d="M0 0l13.900-8A16 16 0 010 16l7-12z" fill="#fccb16" /><path d="M0 0l7 4L0 16A16 16 0 01-13.900-8z" fill="#27a04b" /><circle r="7" fill="#fff" /><circle r="5.500" fill="#4389ee" /></g></svg>
      <svg><path d="M-13-13h26L9 15C4 17-4 17-9 15z" fill="#c9cbcd" opacity=".93" /><ellipse cy="-13" rx="13" ry="3.500" fill="#4c4d4e" stroke="#e3e3e3" stroke-width="1.200" /><path d="M-9-14l4-2 3 3 4-4 5 3-2 3H-7z" fill="#e4e2dd" /><path d="M0-13h3v3H0z" fill="#3f81c4" /><path d="M-8-8l2 22M-3-8v23M4-8L3 15M9-8L6 14" stroke="#eee" opacity=".45" /></svg>
    </div>
  </div>
</template>

<style>
html, body { margin: 0; overflow: hidden; }
</style>

<style scoped>
* { box-sizing: border-box; }
svg { display: block; flex: none; }
i { display: block; }
.desktop { position: relative; width: 1440px; height: 900px; overflow: hidden; font: 13px/16px Inter, "Liberation Sans", sans-serif; color: #161616; white-space: nowrap; background: linear-gradient(90deg, transparent 0, rgba(4, 8, 14, .55) 35%, #05080e 90%), linear-gradient(#020a14 0, #04162a 25%, #052a4a 45%, #123e5e 65%, #1c4a6a 78%, #123a58 90%, #103452 100%); }
.stars, .defs { position: absolute; left: 0; top: 0; }
.desk-label { position: absolute; font-weight: 700; font-size: 12px; color: #dfe5ea; }
.m { left: 18px; top: 238px; }
.l { left: 17px; top: 381px; }
.n { left: 19px; top: 502px; }

.menubar { position: relative; height: 22px; display: flex; align-items: center; padding-left: 20px; background: linear-gradient(90deg, #b0b0b3 0, #a9b2bb 12%, #a3b9c9 30%, #a4bdcf 60%, #a8c2d4 100%); color: #10161c; font-size: 14px; }
.apple { margin-top: -1px; }
.app { margin-left: 20px; font-weight: 700; width: 80px; }
.status { margin-left: auto; display: flex; align-items: center; width: 399px; }
.cc { margin-left: 1px; }
.wifi { margin: -2px 10px 0 8px; }
.pct { font-size: 12px; width: 29px; }
.batt { margin-right: 22px; }
.clock { width: 97px; font-weight: 500; font-size: 13.500px; }
.user { width: 64px; font-weight: 600; font-size: 13.500px; }
.lens { margin-right: 17px; }
.mini-siri { margin-right: 12px; }

.window { position: absolute; left: 25px; top: 23px; width: 1440px; height: 820px; border-radius: 5px 0 0 5px; overflow: hidden; background: #ececec; display: flex; flex-direction: column; }
.titlebar { height: 22px; flex: none; background: linear-gradient(#ebebeb, #d2d2d2); border-bottom: 1px solid #acacac; display: flex; align-items: center; padding-left: 8px; }
.light { width: 12px; height: 12px; border-radius: 50%; margin-right: 8px; border: 1px solid; }
.red { background: #ff4440; border-color: #e0403a; }
.amber { background: #ffc000; border-color: #e0a500; }
.green { background: #00d545; border-color: #07b83d; }
.title { margin-left: 596px; color: #4b4b4b; font-size: 13px; }

.toolbar { height: 36px; flex: none; background: #404040; display: flex; align-items: center; }
.toolbar > svg { width: 28px; height: 36px; fill: none; stroke: #eee; overflow: visible; }
.toolbar > svg.dim { stroke: #858585; }
.brand { width: 90px; height: 26px; background: #ff3844; color: #fff; font-weight: 700; font-size: 12px; display: flex; align-items: center; padding-left: 7px; }
.brand svg { margin-left: 8px; }
.toolbar .g20 { margin-left: 20px; }
.toolbar .g24 { margin-left: 24px; }
.toolbar .g270 { margin-left: 270px; }
.toolbar > svg.caret { width: 18px; }
.toolbar .share { margin-left: 478px; }
.toolbar .g16 { margin-left: 16px; }
.toolbar .g4 { margin-left: 4px; }
.toolbar .g3 { margin-left: 3px; }

.body { height: 723px; flex: none; display: flex; }
.left { width: 280px; display: flex; flex-direction: column; background: #fafafa; }
.treebar { height: 24px; flex: none; background: #d9d9d9; display: flex; align-items: center; padding-left: 4px; }
.treebar > svg { width: 26px; height: 24px; fill: none; stroke: #222; }
.treebar > svg.grey { stroke: #777; }
.treebar > svg.more { width: 20px; stroke: #444; }
.fold { width: 15px; height: 15px; background: #f3f3f3; border: 1px solid #c0c0c0; }
.fold svg { width: 13px; height: 13px; fill: none; stroke: #333; stroke-width: 1.200; }
.treebar .fold { margin-left: 3px; }
.tree { height: 194px; flex: none; padding-top: 2px; border-bottom: 1px solid #f5f5f5; }
.node { height: 24px; display: flex; align-items: center; padding-left: 39px; position: relative; }
.node.root { padding-left: 5px; }
.root .proj { margin: -3px 6px 0 5px; fill: none; stroke: #444; }
.tri { margin-top: -2px; }
.node.open { padding-left: 23px; }
.open .tri { margin-right: 7px; }
.page { width: 11px; height: 15px; fill: #fff; stroke: #555; margin: -2px 8px 0 0; }
.page.big { width: 13px; height: 16px; stroke: #3a3a3a; stroke-width: 1.900; margin-right: 7px; }
.star { margin-left: 7px; padding-top: 2px; }
.node.sel { margin: 0 1px 0 37px; padding-left: 18px; background: #baeef2; border: 1px solid #00c9da; color: #000; }
.tabs { border-top: 5px solid #ececec; height: 29px; flex: none; background: #d9d9d9; display: flex; align-items: center; padding-left: 6px; }
.tab { width: 34px; height: 24px; padding-right: 2px; display: grid; place-items: center; }
.tab svg { fill: none; stroke: #444; }
.tab.on svg { fill: #e80c0c; stroke: none; }
.tab.on { background: #fafafa; width: 35px; padding-right: 1px; }
.tabs .fold { margin-left: 118px; }
.search { margin: 5px 0 0 6px; width: 268px; height: 22px; flex: none; border: 1px solid #8f8f8f; background: #fff; color: #b7b7b7; padding: 3px 0 0 3px; }
.quick { height: 46px; flex: none; padding-top: 7px; display: flex; border-bottom: 1px solid #b8b8b8; }
.quick svg { width: 31px; height: 32px; fill: none; stroke: #444; }
.quick .picked { background: #baeef2; outline: 1px solid #00c9da; outline-offset: -1px; }
.interaction { flex: 1; }
h3 { margin: 0; font-size: 12.500px; font-weight: 700; height: 25px; display: flex; align-items: center; padding-left: 8px; }
h3 svg { margin-right: 12px; }
.widgets { display: grid; grid-template-columns: repeat(3, 93px); grid-template-rows: 78px 74px; padding-top: 2px; }
figure { margin: 0; display: flex; flex-direction: column; align-items: center; font-size: 11px; line-height: 14px; }
figure svg { width: 52px; height: 38px; fill: none; stroke: #666; overflow: visible; margin-bottom: 3px; transform: translateX(-.5px); }
figure:nth-child(n + 4) svg { margin-top: -2px; margin-bottom: 0; height: 39px; }
.group { height: 25px; flex: none; border-top: 1px solid #b8b8b8; display: flex; align-items: center; padding: 1px 0 0 8px; font-weight: 700; font-size: 12.500px; }
.group svg { margin: -2px 12px 0 0; }

.gutter { width: 5px; background: #ececec; display: flex; flex-direction: column; }
.grip { margin-top: 326px; height: 70px; background: #00cadb; display: flex; align-items: center; }

.center { width: 850px; display: flex; flex-direction: column; background: #e4e4e4; }
.stage { height: 681px; flex: none; display: flex; }
.canvas { position: relative; width: 834px; background: #fff; color: #000; font-family: "Liberation Sans", Helvetica, sans-serif; font-size: 14px; }
.label { position: absolute; line-height: 16px; }
.cell { position: absolute; width: 110px; height: 18px; border: 1px solid #5c5c5c; background: #fff; }
.box { position: absolute; border: 1px solid #5c5c5c; background: #fff; display: flex; flex-direction: column; justify-content: center; padding-top: 2px; }
.url { font-size: 10px; line-height: 12px; }
.button { width: 110px; height: 73px; align-items: center; line-height: 17px; }
.vscroll { width: 16px; background: #fff; border: 1px solid #d4d4d4; border-top-color: #ddd; display: flex; flex-direction: column; align-items: center; padding: 1px 0; }
.sb { width: 10px; height: 10px; fill: none; stroke: #aaa; }
.sb path { fill: #999; stroke: none; }
.thumb { background: #c1c1c1; }
.vscroll .thumb { width: 10px; height: 74px; margin-top: 7px; }
.vscroll .end { margin-top: auto; }
.hscroll { width: 834px; height: 16px; flex: none; background: #fff; border-top: 1px solid #d4d4d4; display: flex; align-items: center; padding: 0 2px; }
.hscroll .sb { height: 9px; }
.hscroll .thumb { width: 606px; height: 10px; margin: -1px 0 0 7px; }
.hscroll .end { margin-left: auto; }
.statusbar { height: 26px; flex: none; border-top: 1px solid #b5b5b5; background: #e4e4e4; display: flex; align-items: center; padding-left: 10px; }
.crumbs { width: 648px; font-size: 11px; color: #4f4f4f; }
.zoom { width: 70px; height: 20px; border: 1px solid #999; background: #fafafa; display: flex; align-items: center; padding: 2px 0 0 3px; margin: -1px 14px 0 0; }
.zoom i { width: 1px; height: 16px; background: #999; margin: -2px 7px 0 11px; }
.zoom svg { margin-top: -3px; }
.sbtn { width: 24px; height: 23px; border: 1px solid #bbb; background: #d9d9d9; margin-right: 4px; }
.sbtn svg { margin: -1px; }
.sbtn.on { background: #c9c9c9; border-color: #8f8f8f; }
.wrench { margin-left: 4px; }

.right { width: 300px; display: flex; flex-direction: column; background: #e4e4e4; }
.rhead { height: 25px; flex: none; background: #d9d9d9; border-bottom: 1px solid #b5b5b5; padding: 5px 0 0 10px; }
.props { height: 476px; flex: none; }
.section { height: 29px; padding: 5px 0 0 5px; display: flex; align-items: center; font-weight: 700; font-size: 12.500px; }
.rule { height: 1px; width: 200px; background: #b0b0b0; }
.r1 { margin: -5px 0 0 10px; }
.r2 { margin: -7px 0 0 11px; }
.prop { height: 32px; display: flex; align-items: center; padding-left: 6px; }
.check { width: 13px; height: 13px; fill: none; stroke: #333; margin: -1px 6px 0 0; }
.check path:first-child { fill: #fff; stroke: #888; }
.name { width: 76px; margin-top: -1px; }
.size .name { width: 56px; }
.spin { height: 22px; border: 1px solid #999; background: #fff; display: flex; align-items: center; justify-content: space-between; padding: 1px 7px 0; }
.w96 { width: 96px; }
.w165 { width: 165px; }
.al { width: 6px; height: 6px; fill: #00c3d4; margin-top: -2px; }
.times { width: 15px; text-align: center; font-size: 12px; padding-top: 2px; }
.drop { width: 165px; height: 22px; border: 1px solid #999; background: #ececec; display: flex; align-items: center; padding: 0 5px 0 3px; }
.drop.dark { border-color: #777; background: #e4e4e4; }
.swatch { width: 139px; height: 14px; border: 1px solid #777; background: #fff; }
.dn { width: 9px; height: 6px; margin-left: auto; fill: #111; }
.tick { width: 3px; height: 3px; background: #111; margin: -4px 0 0 8px; }
.apply-to { height: 55px; display: flex; align-items: center; padding-left: 5px; }
.cap { width: 73px; margin-top: -1px; }
.radio { width: 13px; height: 13px; border: 1px solid #999; border-radius: 50%; background: #fff; margin-top: -4px; margin-right: 5px; display: grid; place-items: center; }
.radio.on::before { content: ""; width: 5px; height: 5px; border-radius: 50%; background: #00c9da; }
.opt { width: 82px; }
.apply { margin: 2px 0 0 218px; height: 30px; width: 80px; background: #f09ea4; color: #f8d9dc; padding: 8px 0 0 15px; }
.section.remark { height: 42px; padding-top: 2px; }
.edit { height: 53px; display: flex; align-items: center; padding: 0 0 2px 95px; }
.ohead { height: 29px; flex: none; border-top: 5px solid #ececec; background: #d9d9d9; padding: 6px 0 0 5px; font-weight: 700; font-size: 12.500px; }
.outline { height: 193px; background: linear-gradient(90deg, #e4e4e4 23px, #aaa 23px, #aaa 24px, #fafafa 24px); border-top: 1px solid #aaa; }
.orows { height: 183px; overflow: hidden; }
.orow { height: 24px; display: flex; align-items: center; }
.eye { width: 24px; padding: 0 0 2px 5px; }
.oname { margin-left: 20px; font-size: 12px; }

.footer { height: 39px; flex: none; background: linear-gradient(#00cbdc, #00c4d5); display: flex; align-items: center; padding: 3px 0 0 6px; }
.buy { margin: -3px 0 0 1096px; width: 90px; height: 28px; background: #fafafa; border: 1px solid #ccc; padding: 6px 0 0 16px; }

.dock { position: absolute; left: 29px; top: 853px; width: 1382px; height: 47px; border-radius: 5px 5px 0 0; background: linear-gradient(90deg, #45749a 0, #486f90 35%, #4a6784 60%, #50596a 80%, #55575f 100%); display: grid; grid-template-columns: repeat(23, 38.33px) 17px repeat(7, 38.33px) 17px repeat(5, 38.33px); padding-left: 3px; font-family: "Liberation Sans", sans-serif; }
.dock > svg { width: 38.33px; height: 47px; overflow: visible; transform: translate(19px, 22px); }
.dot { fill: #0a0f16; }
.sep { width: 1px; height: 24px; margin: 12px 0 0 8px; background: #304a61; }
.sep.tall { height: 35px; margin-top: 6px; background: #2f3541; }
</style>
